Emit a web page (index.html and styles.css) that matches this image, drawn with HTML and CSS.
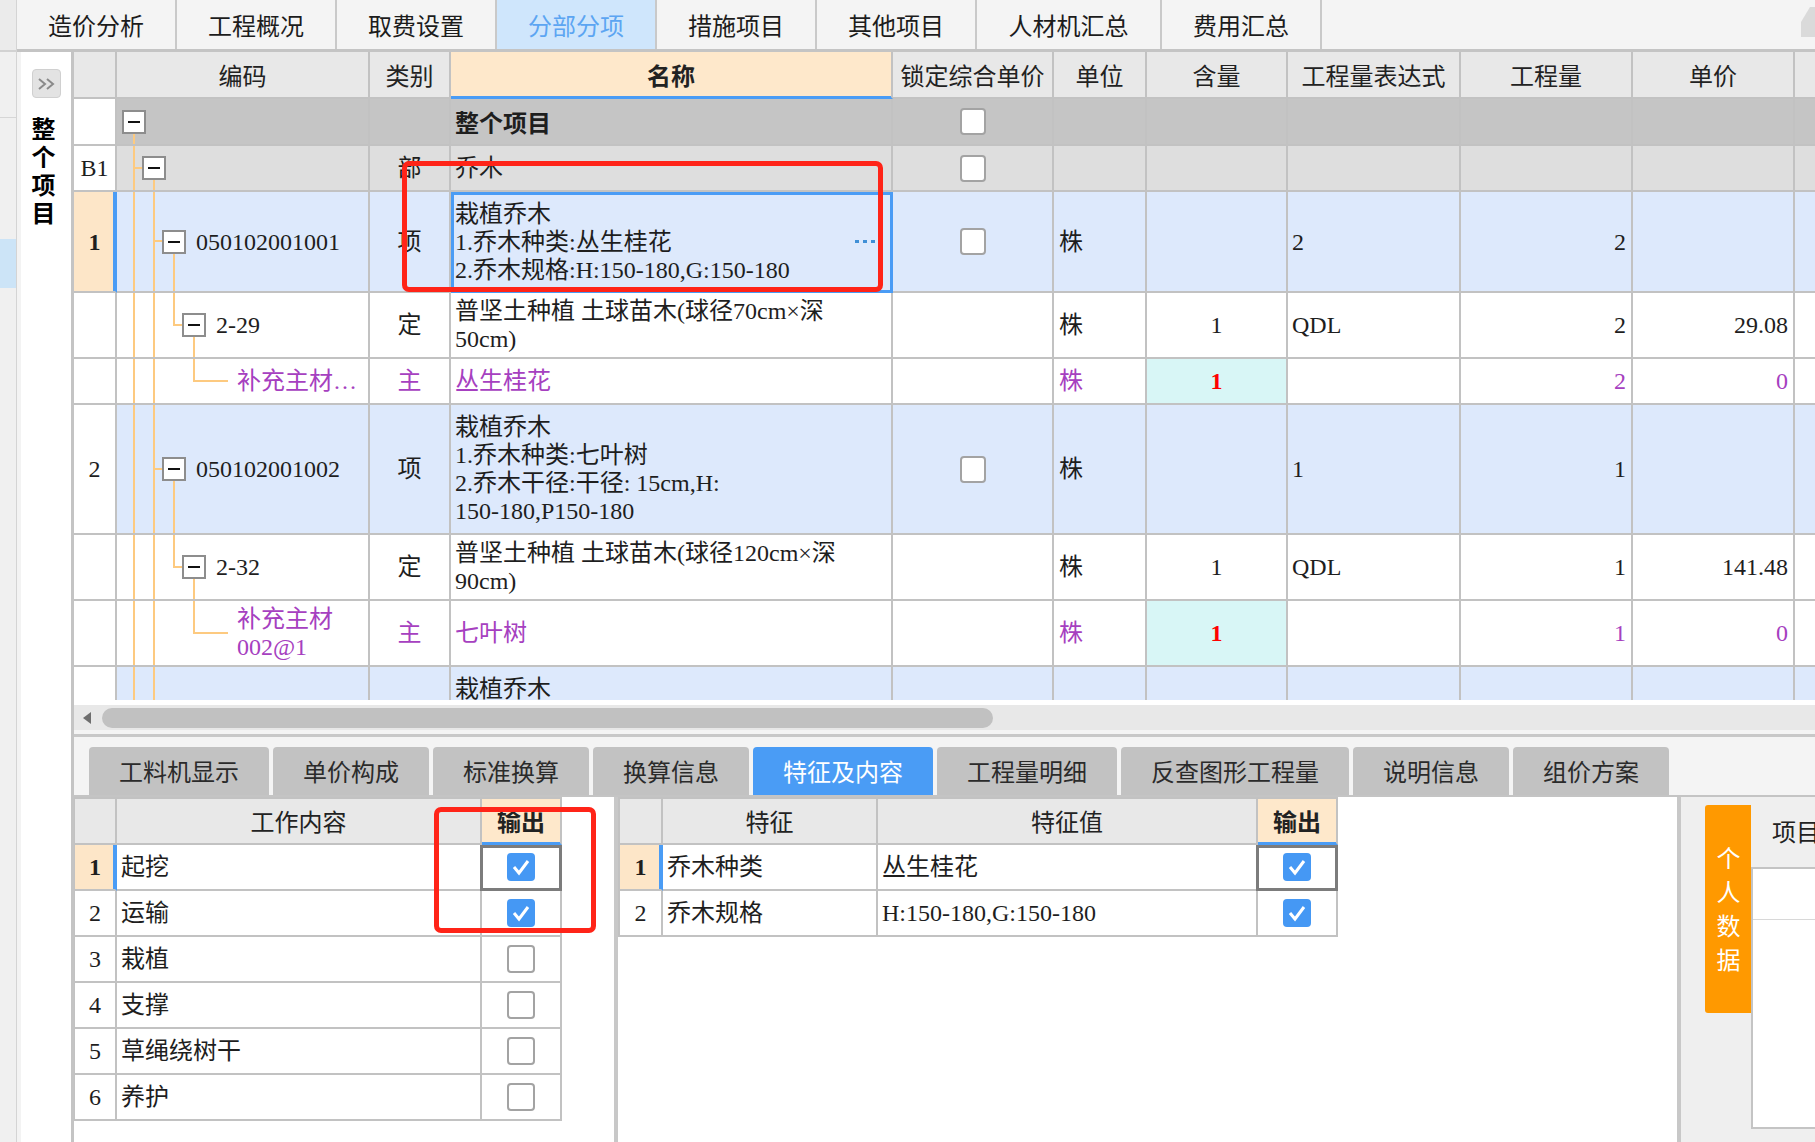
FILE: index.html
```html
<!DOCTYPE html>
<html lang="zh-CN">
<head>
<meta charset="utf-8">
<title>分部分项</title>
<link rel="stylesheet" href="styles.css">
</head>
<body>
<div class="app">
  <div class="strip">
    <div class="strip-top"></div>
    <div class="strip-sec"></div>
    <div class="strip-gap"></div>
    <div class="strip-hl"></div>
  </div>
  <div class="main">
    <div class="topbar">
      <div class="ttab">造价分析</div>
      <div class="ttab">工程概况</div>
      <div class="ttab">取费设置</div>
      <div class="ttab active">分部分项</div>
      <div class="ttab">措施项目</div>
      <div class="ttab">其他项目</div>
      <div class="ttab wide">人材机汇总</div>
      <div class="ttab">费用汇总</div>
      <svg class="corner-icon" width="14" height="49" viewBox="0 0 14 49"><polygon points="0,22 9,7 14,7 14,37 0,37" fill="#dadada"/></svg>
    </div>
    <div class="body">
      <div class="side">
        <div class="side-panel">
          <div class="expand"><svg width="20" height="14" viewBox="0 0 20 14"><path d="M3 2 L9 7 L3 12 M11 2 L17 7 L11 12" fill="none" stroke="#8a8a8a" stroke-width="2"/></svg></div>
          <div class="vtext">整个项目</div>
        </div>
      </div>
      <div class="work">
        <div class="grid-view">
          <table class="grid">
            <colgroup>
              <col class="c-num"><col class="c-code"><col class="c-type"><col class="c-name"><col class="c-lock"><col class="c-unit"><col class="c-qty"><col class="c-expr"><col class="c-amt"><col class="c-price"><col class="c-more">
            </colgroup>
            <tr class="h-head">
              <th></th><th>编码</th><th>类别</th><th class="hname">名称</th><th>锁定综合单价</th><th>单位</th><th>含量</th><th>工程量表达式</th><th>工程量</th><th>单价</th><th></th>
            </tr>
            <tr class="h-all r-all">
              <td class="num"></td>
              <td class="code"><svg class="tree" width="251" height="45"><rect x="16" y="35" width="2" height="10"/></svg><div class="ti ti0"><span class="mbox"></span></div></td>
              <td class="type"></td>
              <td class="name bold">整个项目</td>
              <td class="lock"><span class="cb"></span></td>
              <td></td><td></td><td></td><td></td><td></td><td></td>
            </tr>
            <tr class="h-b1 r-b1">
              <td class="num">B1</td>
              <td class="code"><svg class="tree" width="251" height="44"><rect x="16" y="0" width="2" height="44"/><rect x="18" y="21" width="7" height="2"/><rect x="36" y="34" width="2" height="10"/></svg><div class="ti ti1"><span class="mbox"></span></div></td>
              <td class="type">部</td>
              <td class="name">乔木</td>
              <td class="lock"><span class="cb"></span></td>
              <td></td><td></td><td></td><td></td><td></td><td></td>
            </tr>
            <tr class="h-r1 r-item">
              <td class="num cur">1</td>
              <td class="code"><svg class="tree" width="251" height="99"><rect x="16" y="0" width="2" height="99"/><rect x="36" y="0" width="2" height="99"/><rect x="38" y="48" width="7" height="2"/><rect x="56" y="61" width="2" height="38"/></svg><div class="ti ti2"><span class="mbox"></span><span>050102001001</span></div></td>
              <td class="type">项</td>
              <td class="name sel"><div class="name-in"><div>栽植乔木<br>1.乔木种类:丛生桂花<br>2.乔木规格:H:150-180,G:150-180</div><span class="dots"></span></div></td>
              <td class="lock"><span class="cb"></span></td>
              <td class="unit">株</td>
              <td class="qty"></td>
              <td class="expr">2</td>
              <td class="amt">2</td>
              <td class="price"></td>
              <td></td>
            </tr>
            <tr class="h-def r-plain">
              <td class="num"></td>
              <td class="code"><svg class="tree" width="251" height="64"><rect x="16" y="0" width="2" height="64"/><rect x="36" y="0" width="2" height="64"/><rect x="56" y="0" width="2" height="33"/><rect x="58" y="31" width="7" height="2"/><rect x="76" y="44" width="2" height="20"/></svg><div class="ti ti3"><span class="mbox"></span><span>2-29</span></div></td>
              <td class="type">定</td>
              <td class="name">普坚土种植 土球苗木(球径70cm×深<br>50cm)</td>
              <td class="lock"></td>
              <td class="unit">株</td>
              <td class="qty">1</td>
              <td class="expr">QDL</td>
              <td class="amt">2</td>
              <td class="price">29.08</td>
              <td></td>
            </tr>
            <tr class="h-mat r-plain purple">
              <td class="num"></td>
              <td class="code"><svg class="tree" width="251" height="44"><rect x="16" y="0" width="2" height="44"/><rect x="36" y="0" width="2" height="44"/><rect x="76" y="0" width="2" height="23"/><rect x="78" y="21" width="33" height="2"/></svg><div class="ti ti4"><span>补充主材…</span></div></td>
              <td class="type">主</td>
              <td class="name">丛生桂花</td>
              <td class="lock"></td>
              <td class="unit">株</td>
              <td class="qty hit">1</td>
              <td class="expr"></td>
              <td class="amt">2</td>
              <td class="price">0</td>
              <td></td>
            </tr>
            <tr class="h-r2 r-item">
              <td class="num">2</td>
              <td class="code"><svg class="tree" width="251" height="128"><rect x="16" y="0" width="2" height="128"/><rect x="36" y="0" width="2" height="128"/><rect x="38" y="63" width="7" height="2"/><rect x="56" y="76" width="2" height="52"/></svg><div class="ti ti2"><span class="mbox"></span><span>050102001002</span></div></td>
              <td class="type">项</td>
              <td class="name">栽植乔木<br>1.乔木种类:七叶树<br>2.乔木干径:干径: 15cm,H:<br>150-180,P150-180</td>
              <td class="lock"><span class="cb"></span></td>
              <td class="unit">株</td>
              <td class="qty"></td>
              <td class="expr">1</td>
              <td class="amt">1</td>
              <td class="price"></td>
              <td></td>
            </tr>
            <tr class="h-def r-plain">
              <td class="num"></td>
              <td class="code"><svg class="tree" width="251" height="64"><rect x="16" y="0" width="2" height="64"/><rect x="36" y="0" width="2" height="64"/><rect x="56" y="0" width="2" height="33"/><rect x="58" y="31" width="7" height="2"/><rect x="76" y="44" width="2" height="20"/></svg><div class="ti ti3"><span class="mbox"></span><span>2-32</span></div></td>
              <td class="type">定</td>
              <td class="name">普坚土种植 土球苗木(球径120cm×深<br>90cm)</td>
              <td class="lock"></td>
              <td class="unit">株</td>
              <td class="qty">1</td>
              <td class="expr">QDL</td>
              <td class="amt">1</td>
              <td class="price">141.48</td>
              <td></td>
            </tr>
            <tr class="h-def r-plain purple">
              <td class="num"></td>
              <td class="code"><svg class="tree" width="251" height="64"><rect x="16" y="0" width="2" height="64"/><rect x="36" y="0" width="2" height="64"/><rect x="76" y="0" width="2" height="33"/><rect x="78" y="31" width="33" height="2"/></svg><div class="ti ti4"><span>补充主材<br>002@1</span></div></td>
              <td class="type">主</td>
              <td class="name">七叶树</td>
              <td class="lock"></td>
              <td class="unit">株</td>
              <td class="qty hit">1</td>
              <td class="expr"></td>
              <td class="amt">1</td>
              <td class="price">0</td>
              <td></td>
            </tr>
            <tr class="h-r2 r-item">
              <td class="num"></td>
              <td class="code"><svg class="tree" width="251" height="128"><rect x="16" y="0" width="2" height="128"/><rect x="36" y="0" width="2" height="128"/></svg></td>
              <td class="type"></td>
              <td class="name top">栽植乔木</td>
              <td class="lock"></td>
              <td class="unit"></td>
              <td class="qty"></td>
              <td class="expr"></td>
              <td class="amt"></td>
              <td class="price"></td>
              <td></td>
            </tr>
          </table>
        </div>
        <div class="hscroll">
          <div class="track"><span class="arrow-l"></span><div class="thumb"></div></div>
        </div>
        <div class="splitter"></div>
        <div class="btabs">
          <div class="btab">工料机显示</div>
          <div class="btab">单价构成</div>
          <div class="btab">标准换算</div>
          <div class="btab">换算信息</div>
          <div class="btab active">特征及内容</div>
          <div class="btab">工程量明细</div>
          <div class="btab">反查图形工程量</div>
          <div class="btab">说明信息</div>
          <div class="btab">组价方案</div>
        </div>
        <div class="bottom">
          <div class="pane-l">
            <table class="sub sub-l">
              <colgroup><col class="s-num"><col class="s-work"><col class="s-out"></colgroup>
              <tr><th></th><th>工作内容</th><th class="hout">输出</th></tr>
              <tr><td class="num cur">1</td><td class="txt">起挖</td><td class="out sel"><span class="cb lg on"><svg width="28" height="28" viewBox="0 0 28 28"><path d="M7 14 L12 20 L21 8" fill="none" stroke="#fff" stroke-width="3"/></svg></span></td></tr>
              <tr><td class="num">2</td><td class="txt">运输</td><td class="out"><span class="cb lg on"><svg width="28" height="28" viewBox="0 0 28 28"><path d="M7 14 L12 20 L21 8" fill="none" stroke="#fff" stroke-width="3"/></svg></span></td></tr>
              <tr><td class="num">3</td><td class="txt">栽植</td><td class="out"><span class="cb lg"></span></td></tr>
              <tr><td class="num">4</td><td class="txt">支撑</td><td class="out"><span class="cb lg"></span></td></tr>
              <tr><td class="num">5</td><td class="txt">草绳绕树干</td><td class="out"><span class="cb lg"></span></td></tr>
              <tr><td class="num">6</td><td class="txt">养护</td><td class="out"><span class="cb lg"></span></td></tr>
            </table>
          </div>
          <div class="vsplit"></div>
          <div class="pane-r">
            <table class="sub sub-r">
              <colgroup><col class="s-num2"><col class="s-feat"><col class="s-val"><col class="s-out"></colgroup>
              <tr><th></th><th>特征</th><th>特征值</th><th class="hout">输出</th></tr>
              <tr><td class="num cur">1</td><td class="txt">乔木种类</td><td class="txt">丛生桂花</td><td class="out sel"><span class="cb lg on"><svg width="28" height="28" viewBox="0 0 28 28"><path d="M7 14 L12 20 L21 8" fill="none" stroke="#fff" stroke-width="3"/></svg></span></td></tr>
              <tr><td class="num">2</td><td class="txt">乔木规格</td><td class="txt">H:150-180,G:150-180</td><td class="out"><span class="cb lg on"><svg width="28" height="28" viewBox="0 0 28 28"><path d="M7 14 L12 20 L21 8" fill="none" stroke="#fff" stroke-width="3"/></svg></span></td></tr>
            </table>
          </div>
          <div class="vsplit"></div>
          <div class="data">
            <div class="otab"><span class="otab-text">个人数据</span></div>
            <div class="dbox">
              <div class="dhead">项目</div>
              <div class="dbody"><div class="drow"></div></div>
            </div>
          </div>
        </div>
      </div>
    </div>
  </div>
  <div class="redbox rb1"></div>
  <div class="redbox rb2"></div>
</div>
</body>
</html>
```

FILE: styles.css
```css
* { box-sizing: border-box; }
html, body { margin: 0; padding: 0; }
body {
  width: 1815px; height: 1142px; overflow: hidden; background: #ffffff;
  font-family: "Noto Sans CJK SC", sans-serif; color: #1e1e1e;
}
.app { position: relative; display: flex; width: 1815px; height: 1142px; overflow: hidden; }

/* far-left strip */
.strip { flex: none; width: 17px; display: flex; flex-direction: column; background: #f0f0f0; border-right: 1px solid #d4d4d4; }
.strip-top { height: 52px; background: #ebebeb; border-bottom: 2px solid #d2d2d2; }
.strip-sec { height: 66px; border-bottom: 1px solid #d6d6d6; }
.strip-gap { height: 121px; }
.strip-hl { height: 49px; background: #cce4f7; }

.main { flex: 1; min-width: 0; display: flex; flex-direction: column; }

/* top tabs */
.topbar { flex: none; height: 52px; display: flex; background: #f4f4f4; border-bottom: 3px solid #c4c4c4; }
.ttab { flex: none; width: 160px; height: 49px; line-height: 49px; text-align: center; font-size: 24px; color: #1c1c1c; border-right: 2px solid #c9c9c9; }
.ttab.wide { width: 185px; }
.ttab.active { background: #cfe6fc; color: #5ca5f2; }
.corner-icon { margin-left: auto; flex: none; display: block; }

.body { flex: 1; min-height: 0; display: flex; }

/* side panel */
.side { flex: none; width: 57px; padding-left: 4px; background: #f3f3f3; border-right: 3px solid #c4c4c4; }
.side-panel { height: 100%; background: #ffffff; display: flex; flex-direction: column; align-items: center; padding-top: 17px; }
.expand { width: 29px; height: 29px; border: 1px solid #d0d0d0; border-radius: 4px; background: #e3e3e3; display: flex; align-items: center; justify-content: center; }
.expand svg { display: block; }
.vtext {
  margin-top: 19px; margin-right: 6px;
  writing-mode: vertical-rl; text-orientation: upright; letter-spacing: 4px;
  font-size: 24px; font-weight: 700; line-height: 24px; color: #000;
}

.work { flex: 1; min-width: 0; display: flex; flex-direction: column; }

/* main grid */
.grid-view { flex: none; height: 648px; overflow: hidden; }
.grid {
  table-layout: fixed; border-collapse: separate; border-spacing: 0; width: 1781px;
  font-family: "Liberation Serif", "Noto Sans CJK SC", serif; font-size: 24px; line-height: 28px; color: #1e1e1e;
}
.grid th, .grid td {
  padding: 0 5px; border-right: 2px solid #c2c2c2; border-bottom: 2px solid #c2c2c2;
  white-space: nowrap; vertical-align: middle;
}
.grid th { font-weight: 400; background: #e8e8e8; text-align: center; font-family: "Noto Sans CJK SC", sans-serif; color: #222; }
.grid th.hname { background: #fee8cb; font-weight: 700; border-bottom-color: #4a9cf5; box-shadow: inset 0 -1px 0 #4a9cf5; }

.c-num { width: 43px; } .c-code { width: 253px; } .c-type { width: 81px; } .c-name { width: 442px; }
.c-lock { width: 161px; } .c-unit { width: 93px; } .c-qty { width: 141px; } .c-expr { width: 173px; }
.c-amt { width: 172px; } .c-price { width: 162px; } .c-more { width: 60px; }

.h-head { height: 47px; } .h-all { height: 47px; } .h-b1 { height: 46px; } .h-r1 { height: 101px; }
.h-def { height: 66px; } .h-mat { height: 46px; } .h-r2 { height: 130px; }

.r-all td { background: #c5c5c5; }
.r-b1 td { background: #dedede; }
.r-item td { background: #dde9fc; }
.r-plain td { background: #ffffff; }
.grid td.num { background: #ffffff; text-align: center; padding: 0; }
.grid td.num.cur, .sub td.num.cur { background: #fde6c8; font-weight: 700; border-right-color: #4a9cf5; box-shadow: inset -2px 0 0 #4a9cf5; }

.grid td.code { position: relative; padding: 0; }
.tree { position: absolute; left: 0; top: 0; display: block; }
.tree rect { fill: #fdca80; }
.ti { position: relative; display: flex; align-items: center; gap: 10px; }
.ti0 { padding-left: 5px; } .ti1 { padding-left: 25px; } .ti2 { padding-left: 45px; } .ti3 { padding-left: 65px; } .ti4 { padding-left: 120px; }
.mbox { flex: none; width: 24px; height: 24px; border: 2px solid #8d8d8d; background: #ffffff; display: flex; align-items: center; justify-content: center; }
.mbox::before { content: ""; width: 12px; height: 2px; background: #111; }

.grid td.type { text-align: center; }
.grid td.name { padding-left: 4px; position: relative; }
.grid td.name.bold { font-weight: 700; font-family: "Noto Sans CJK SC", sans-serif; }
.grid td.name.top { vertical-align: top; padding-top: 8px; }
.grid td.name.sel::after { content: ""; position: absolute; left: 0; top: 0; right: -2px; bottom: -2px; border: 3px solid #4a9cf5; }
.name-in { display: flex; align-items: center; justify-content: space-between; padding-right: 11px; }
.dots { flex: none; width: 20px; height: 3px; background: repeating-linear-gradient(90deg, #3f8fd6 0 4px, transparent 4px 8px); }
.grid td.unit { padding-left: 5px; }
.grid td.qty { text-align: center; }
.grid td.expr { padding-left: 4px; }
.grid td.amt, .grid td.price { text-align: right; padding-right: 5px; }
.purple { color: #a640c0; }
.grid td.qty.hit { background: #d8f6f6; color: #ff0000; font-weight: 700; }

/* checkboxes */
.cb { display: block; margin: 0 auto; width: 26px; height: 27px; border: 2px solid #a3a3a3; border-radius: 4px; background: #ffffff; }
.cb.lg { width: 28px; height: 28px; }
.cb.on { border: none; background: #4598f4; }
.cb.on svg { display: block; }

/* horizontal scrollbar */
.hscroll { flex: none; height: 30px; padding-top: 5px; background: #ffffff; }
.track { height: 25px; background: #e8e8e8; display: flex; align-items: center; padding-left: 9px; }
.arrow-l { width: 0; height: 0; border-right: 8px solid #6e6e6e; border-top: 6px solid transparent; border-bottom: 6px solid transparent; }
.thumb { margin-left: 11px; width: 891px; height: 20px; border-radius: 10px; background: #c1c1c1; }

.splitter { flex: none; height: 7px; background: #f4f4f4; border-bottom: 3px solid #c8c8c8; }

/* bottom tabs */
.btabs { flex: none; height: 60px; display: flex; gap: 4px; align-items: flex-end; padding-left: 15px; background: #f4f4f4; border-bottom: 2px solid #c4c4c4; }
.btab { height: 48px; line-height: 48px; padding: 0 30px; font-size: 24px; color: #2b2b2b; background: #c2c2c2; border-radius: 4px 4px 0 0; }
.btab.active { background: #4a9cf5; color: #ffffff; }

/* bottom panes */
.bottom { flex: 1; min-height: 0; display: flex; }
.pane-l { flex: none; width: 540px; background: #ffffff; }
.vsplit { flex: none; width: 4px; background: #c8c8c8; }
.pane-r { flex: none; width: 1059px; background: #ffffff; }

.sub {
  table-layout: fixed; border-collapse: separate; border-spacing: 0; border-top: 2px solid #c2c2c2;
  font-family: "Liberation Serif", "Noto Sans CJK SC", serif; font-size: 24px; line-height: 28px; color: #1e1e1e;
}
.sub-l { width: 488px; border-left: 1px solid #c2c2c2; }
.sub-r { width: 720px; border-left: 2px solid #c2c2c2; }
.s-num { width: 42px; } .s-work { width: 365px; } .s-out { width: 80px; }
.s-num2 { width: 43px; } .s-feat { width: 215px; } .s-val { width: 380px; }
.sub tr { height: 46px; }
.sub th, .sub td { padding: 0; border-right: 2px solid #c2c2c2; border-bottom: 2px solid #c2c2c2; white-space: nowrap; vertical-align: middle; background: #ffffff; }
.sub th { background: #e8e8e8; font-weight: 400; text-align: center; font-family: "Noto Sans CJK SC", sans-serif; color: #222; }
.sub th.hout { background: #fee8cb; font-weight: 700; border-bottom-color: #4a9cf5; box-shadow: inset 0 -1px 0 #4a9cf5; }
.sub td.num { text-align: center; }
.sub td.txt { padding-left: 4px; }
.sub td.out { position: relative; }
.sub td.out.sel::after { content: ""; position: absolute; left: -2px; top: 0; right: -2px; bottom: -2px; border: 3px solid #7c7c7c; }

/* personal data panel */
.data { flex: 1; min-width: 0; display: flex; padding: 8px 0 0 24px; background: #efefef; }
.otab { flex: none; width: 46px; height: 208px; background: #ff9900; border-radius: 3px 0 0 3px; display: flex; justify-content: center; padding-top: 41px; }
.otab-text { writing-mode: vertical-rl; text-orientation: upright; letter-spacing: 10px; color: #ffffff; font-size: 24px; line-height: 24px; }
.dbox { flex: 1; min-width: 0; display: flex; flex-direction: column; }
.dhead { flex: none; height: 62px; padding: 12px 0 0 21px; font-size: 24px; line-height: 28px; color: #222; white-space: nowrap; overflow: hidden; }
.dbody { flex: none; height: 262px; background: #ffffff; border-top: 2px solid #c4c4c4; border-left: 2px solid #c4c4c4; border-bottom: 2px solid #c4c4c4; }
.drow { height: 51px; border-bottom: 1px solid #d8d8d8; }

/* annotations */
.redbox { position: absolute; border: 5px solid #ff2418; border-radius: 7px; pointer-events: none; }
.rb1 { left: 402px; top: 161px; width: 481px; height: 131px; }
.rb2 { left: 434px; top: 807px; width: 162px; height: 126px; }
```
